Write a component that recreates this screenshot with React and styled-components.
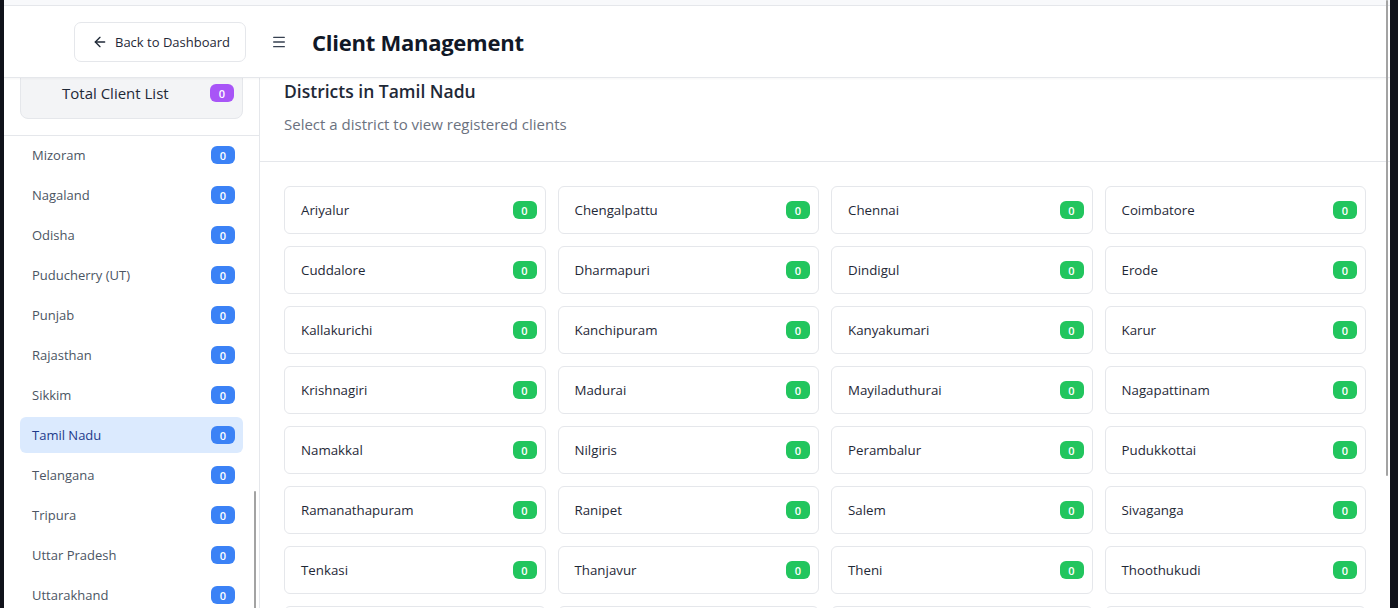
import React from "react";
import styled, { createGlobalStyle } from "styled-components";
import { ArrowLeft, Menu } from "lucide-react";

const GlobalStyle = createGlobalStyle`
  html, body {
    margin: 0;
    padding: 0;
    height: 100%;
    overflow: hidden;
    background: #10121a;
  }
  * {
    box-sizing: border-box;
  }
  body {
    font-family: "Open Sans", "Noto Sans", "Liberation Sans", sans-serif;
  }
`;

const Frame = styled.div`
  position: relative;
  display: flex;
  flex-direction: column;
  height: 100vh;
  margin: 0 8px 0 4px;
  background: #ffffff;
  overflow: hidden;
`;

const TopStrip = styled.div`
  height: 6px;
  flex-shrink: 0;
  background: #f8f9fb;
  border-bottom: 1px solid #e5e7eb;
`;

const Header = styled.header`
  display: flex;
  align-items: center;
  height: 72px;
  flex-shrink: 0;
  padding: 0 0 0 70px;
  border-bottom: 1px solid #e5e7eb;
  box-shadow: 0 1px 2px rgba(0, 0, 0, 0.04);
  position: relative;
  z-index: 2;
  background: #fff;
`;

const BackButton = styled.button`
  display: flex;
  align-items: center;
  gap: 7px;
  height: 40px;
  padding: 0 15px 0 17px;
  background: #fff;
  border: 1px solid #e5e7eb;
  border-radius: 7px;
  font-family: inherit;
  font-size: 13px;
  color: #1f2937;
  cursor: pointer;
`;

const MenuButton = styled.span`
  display: flex;
  color: #374151;
  margin: 0 25px 0 25px;
`;

const PageTitle = styled.h1`
  margin: 0;
  font-size: 22px;
  font-weight: 700;
  color: #111827;
  letter-spacing: -0.25px;
`;

const Body = styled.div`
  display: flex;
  flex: 1;
  min-height: 0;
`;

const Sidebar = styled.aside`
  position: relative;
  width: 256px;
  flex-shrink: 0;
  border-right: 1px solid #e5e7eb;
  overflow: hidden;
`;

const TotalWrap = styled.div`
  padding: 0 16px 16px;
  border-bottom: 1px solid #e5e7eb;
`;

const TotalCard = styled.div`
  display: flex;
  align-items: center;
  justify-content: space-between;
  height: 51px;
  margin-top: -10px;
  padding: 0 8px 1px 41px;
  background: #f3f4f6;
  border: 1px solid #e5e7eb;
  border-radius: 8px;
  font-size: 15px;
  color: #1f2937;
`;

const StateList = styled.ul`
  list-style: none;
  margin: 0;
  padding: 1px 16px 0;
  display: flex;
  flex-direction: column;
  gap: 4px;
`;

const StateItem = styled.li`
  display: flex;
  align-items: center;
  justify-content: space-between;
  height: 36px;
  padding: 0 8px 0 12px;
  border-radius: 6px;
  font-size: 13px;
  color: ${({ $active }) => ($active ? "#1e3a8a" : "#4b5563")};
  background: ${({ $active }) => ($active ? "#dbeafe" : "transparent")};
`;

const Badge = styled.span`
  display: inline-flex;
  align-items: center;
  justify-content: center;
  min-width: 24px;
  height: 18px;
  padding: 0 6px;
  border-radius: 6px;
  font-size: 11px;
  font-weight: 600;
  color: #fff;
  background: ${({ $tone }) =>
    $tone === "purple" ? "#a855f7" : $tone === "green" ? "#22c55e" : "#3b82f6"};
`;

const Content = styled.main`
  flex: 1;
  min-width: 0;
  overflow: hidden;
`;

const ContentHead = styled.div`
  padding: 0 24px;
  height: 84px;
  border-bottom: 1px solid #e5e7eb;
`;

const SectionTitle = styled.h2`
  margin: 0;
  font-size: 17.5px;
  line-height: 27px;
  font-weight: 600;
  color: #1f2937;
`;

const SectionSub = styled.p`
  margin: 9px 0 0;
  font-size: 15px;
  line-height: 20px;
  color: #6b7280;
`;

const DistrictGrid = styled.div`
  display: grid;
  grid-template-columns: repeat(4, minmax(0, 1fr));
  gap: 12px;
  padding: 24px;
`;

const DistrictCard = styled.div`
  display: flex;
  align-items: center;
  justify-content: space-between;
  height: 48px;
  padding: 0 8px 0 16px;
  border: 1px solid #e5e7eb;
  border-radius: 6px;
  font-size: 13.3px;
  color: #1f2937;
  background: #fff;
`;

const ScrollThumb = styled.div`
  position: absolute;
  z-index: 5;
  width: 2px;
  background: #a3a3a3;
  border-radius: 1px;
  right: ${({ $right }) => $right}px;
  top: ${({ $top }) => $top}px;
  height: ${({ $height }) => $height}px;
`;

const states = [
  "Mizoram",
  "Nagaland",
  "Odisha",
  "Puducherry (UT)",
  "Punjab",
  "Rajasthan",
  "Sikkim",
  "Tamil Nadu",
  "Telangana",
  "Tripura",
  "Uttar Pradesh",
  "Uttarakhand",
  "West Bengal",
];

const districts = [
  "Ariyalur", "Chengalpattu", "Chennai", "Coimbatore",
  "Cuddalore", "Dharmapuri", "Dindigul", "Erode",
  "Kallakurichi", "Kanchipuram", "Kanyakumari", "Karur",
  "Krishnagiri", "Madurai", "Mayiladuthurai", "Nagapattinam",
  "Namakkal", "Nilgiris", "Perambalur", "Pudukkottai",
  "Ramanathapuram", "Ranipet", "Salem", "Sivaganga",
  "Tenkasi", "Thanjavur", "Theni", "Thoothukudi",
  "Tiruchirappalli", "Tirunelveli", "Tirupathur", "Tiruppur",
  "Tiruvallur", "Tiruvannamalai", "Tiruvarur", "Vellore",
  "Viluppuram", "Virudhunagar",
];

const App = () => {
  return (
    <>
      <GlobalStyle />
      <Frame>
        <TopStrip />
        <Header>
          <BackButton>
            <ArrowLeft size={16} strokeWidth={2} />
            Back to Dashboard
          </BackButton>
          <MenuButton>
            <Menu size={16} strokeWidth={2} />
          </MenuButton>
          <PageTitle>Client Management</PageTitle>
        </Header>
        <Body>
          <Sidebar>
            <TotalWrap>
              <TotalCard>
                Total Client List
                <Badge $tone="purple">0</Badge>
              </TotalCard>
            </TotalWrap>
            <StateList>
              {states.map((s) => (
                <StateItem key={s} $active={s === "Tamil Nadu"}>
                  {s}
                  <Badge>0</Badge>
                </StateItem>
              ))}
            </StateList>
            <ScrollThumb $right={3} $top={413} $height={200} />
          </Sidebar>
          <Content>
            <ContentHead>
              <SectionTitle>Districts in Tamil Nadu</SectionTitle>
              <SectionSub>Select a district to view registered clients</SectionSub>
            </ContentHead>
            <DistrictGrid>
              {districts.map((d) => (
                <DistrictCard key={d}>
                  {d}
                  <Badge $tone="green">0</Badge>
                </DistrictCard>
              ))}
            </DistrictGrid>
          </Content>
        </Body>
        <ScrollThumb $right={2} $top={0} $height={476} />
      </Frame>
    </>
  );
};

export default App;
